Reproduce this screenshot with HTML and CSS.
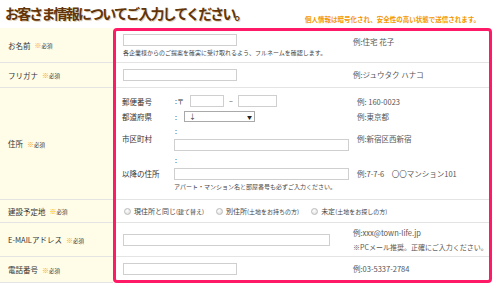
FILE: index.html
```html
<!DOCTYPE html>
<html lang="ja">
<head>
    <meta charset="UTF-8">
    <title>お客さま情報</title>
    <link rel="stylesheet" href="styles.css">
</head>
<body>
    <div class="page">
        <div class="head">
            <h1 class="title">お客さま情報についてご入力してください。</h1>
            <p class="secure">個人情報は暗号化され、安全性の高い状態で送信されます。</p>
        </div>

        <div class="form">
            <div class="labels">
                <div class="label h-name">お名前<span class="req"><b>※</b>必須</span></div>
                <div class="label h-kana">フリガナ<span class="req"><b>※</b>必須</span></div>
                <div class="label h-addr">住所<span class="req"><b>※</b>必須</span></div>
                <div class="label h-build">建設予定地<span class="req"><b>※</b>必須</span></div>
                <div class="label h-mail">E-MAILアドレス<span class="req"><b>※</b>必須</span></div>
                <div class="label h-tel">電話番号<span class="req"><b>※</b>必須</span></div>
            </div>

            <div class="panel">
                <div class="row r-name">
                    <div class="field top">
                        <input class="text" type="text">
                        <p class="note">各企業様からのご提案を確実に受け取れるよう、フルネームを確認します。</p>
                    </div>
                    <div class="ex ex-name">例:住宅 花子</div>
                </div>

                <div class="row r-kana">
                    <div class="field">
                        <input class="text" type="text">
                    </div>
                    <div class="ex">例:ジュウタク ハナコ</div>
                </div>

                <div class="row r-addr">
                    <div class="addr">
                        <div class="sub-label">郵便番号</div>
                        <div class="sub-field inline">
                            <span class="colon">:〒</span>
                            <input class="text zip1" type="text">
                            <span class="dash">−</span>
                            <input class="text zip2" type="text">
                        </div>
                        <div class="sub-ex">例: 160-0023</div>

                        <div class="sub-label">都道府県</div>
                        <div class="sub-field inline">
                            <span class="colon">:</span>
                            <div class="select"><span>↓</span><span class="arrow">▼</span></div>
                        </div>
                        <div class="sub-ex">例:東京都</div>

                        <div class="sub-label">市区町村</div>
                        <div class="sub-field">
                            <span class="colon-line">:</span>
                            <input class="text long" type="text">
                        </div>
                        <div class="sub-ex">例:新宿区西新宿</div>

                        <div class="sub-label">以降の住所</div>
                        <div class="sub-field">
                            <span class="colon-line">:</span>
                            <input class="text long" type="text">
                            <p class="note">アパート・マンション名と部屋番号も必ずご入力ください。</p>
                        </div>
                        <div class="sub-ex">例:7-7-6　〇〇マンション101</div>
                    </div>
                </div>

                <div class="row r-build">
                    <div class="radios">
                        <label class="radio"><input type="radio" name="site">現住所と同じ<small>(建て替え)</small></label>
                        <label class="radio"><input type="radio" name="site">別住所<small>(土地をお持ちの方)</small></label>
                        <label class="radio"><input type="radio" name="site">未定<small>(土地をお探しの方)</small></label>
                    </div>
                </div>

                <div class="row r-mail">
                    <div class="field">
                        <input class="text wide" type="text">
                    </div>
                    <div class="ex">
                        <span>例:xxx@town-life.jp</span>
                        <span class="ex-small">※PCメール推奨。正確にご入力ください。</span>
                    </div>
                </div>

                <div class="row r-tel">
                    <div class="field">
                        <input class="text" type="text">
                    </div>
                    <div class="ex">例:03-5337-2784</div>
                </div>
            </div>
        </div>
    </div>
</body>
</html>
```

FILE: styles.css
```css
* {
    box-sizing: border-box;
}
body {
    margin: 0;
    font-family: "Noto Sans CJK JP", "Noto Sans", sans-serif;
    color: #333;
    background: #fff;
}
.page {
    width: 500px;
}
.head {
    height: 28px;
    display: flex;
    justify-content: space-between;
    align-items: flex-start;
    padding: 0 20px 0 5px;
}
.title {
    margin: 0;
    font-size: 14px;
    line-height: 26px;
    font-weight: bold;
    color: #623408; /* brown heading */
    letter-spacing: -1.85px;
    white-space: nowrap;
    text-shadow: 1px 1px 0 #e2d3bb, -1px 0 0 #fff;
}
.secure {
    margin: 14px 0 0;
    font-size: 6.5px;
    line-height: 10px;
    font-weight: bold;
    color: #f39800;
    white-space: nowrap;
}

.form {
    display: flex;
    width: 492px;
}
.labels {
    width: 113px;
    display: flex;
    flex-direction: column;
}
.label {
    background: #fffde8;
    border-bottom: 1px solid #e4e4e4;
    display: flex;
    align-items: center;
    padding-left: 8px;
    font-size: 7.5px;
    white-space: nowrap;
}
.req {
    margin-left: 4px;
    font-size: 5.5px;
}
.req b {
    color: #f5a623;
    font-weight: normal;
    font-size: 7px;
}
.h-name { height: 35px; }
.h-kana { height: 25px; }
.h-addr { height: 112px; }
.h-build { height: 23px; }
.h-mail { height: 34px; }
.h-tel { height: 26px; }

.panel {
    flex: 1;
    border: 3px solid #ff1a68;
    border-radius: 4px;
}
.row {
    display: flex;
    border-bottom: 1px solid #e4e4e4;
}
.row:last-child {
    border-bottom: none;
}
.r-name { height: 32px; }
.r-kana { height: 25px; }
.r-addr { height: 112px; }
.r-build { height: 23px; }
.r-mail { height: 34px; }
.r-tel { height: 23px; }

.field {
    width: 234px;
    padding-left: 7px;
    display: flex;
    flex-direction: column;
    justify-content: center;
}
.field.top {
    justify-content: flex-start;
    padding-top: 3px;
}
.text {
    display: block;
    width: 114px;
    height: 12px;
    margin: 0;
    padding: 0;
    border: 1px solid #cfcfcf;
    background: #fff;
}
.wide {
    width: 207px;
}
.note {
    margin: 2px 0 0;
    font-size: 6px;
    line-height: 10px;
    color: #444;
    white-space: nowrap;
}
.ex {
    padding-left: 3px;
    display: flex;
    flex-direction: column;
    justify-content: center;
    font-size: 7.5px;
    line-height: 14px;
    color: #555;
    white-space: nowrap;
}
.ex-name {
    justify-content: flex-start;
    padding-top: 4px;
}
.ex-small {
    font-size: 7px;
}

/* address block */
.addr {
    width: 100%;
    display: grid;
    grid-template-columns: 50px 178px 1fr;
    row-gap: 4px;
    align-items: center;
    align-content: start;
    padding: 7px 0 0 6px;
}
.sub-label {
    font-size: 7.5px;
    white-space: nowrap;
}
.sub-field {
    padding-left: 2px;
    display: flex;
    flex-direction: column;
}
.sub-field.inline {
    flex-direction: row;
    align-items: center;
    font-size: 7px;
}
.colon {
    margin-left: 1px;
    width: 15px;
    flex: none;
}
.zip1 {
    width: 34px;
}
.dash {
    width: 14px;
    text-align: center;
    color: #555;
}
.zip2 {
    width: 39px;
}
.select {
    width: 71px;
    height: 11px;
    margin-left: -6px;
    border: 1px solid #a9a9a9;
    background: #fff;
    display: flex;
    justify-content: space-between;
    align-items: center;
    padding: 0 2px 0 4px;
    font-size: 7px;
    line-height: 9px;
}
.arrow {
    font-size: 5px;
    color: #222;
}
.colon-line {
    margin-left: 1px;
    font-size: 7px;
    line-height: 10px;
    height: 10px;
    margin-bottom: 3px;
}
.long {
    width: 175px;
}
.sub-ex {
    padding-left: 7px;
    font-size: 7.5px;
    color: #555;
    white-space: nowrap;
}

/* radios */
.radios {
    display: flex;
    align-items: center;
    padding-left: 8px;
    font-size: 7px;
    white-space: nowrap;
}
.radio {
    display: flex;
    align-items: center;
    margin-right: 12px;
    color: #444;
}
.radio input {
    appearance: none;
    width: 7px;
    height: 7px;
    margin: 0 3px 0 0;
    border: 1px solid #bbb;
    border-radius: 50%;
    background: radial-gradient(circle at 40% 35%, #fff, #d8d8d8);
}
.radio small {
    font-size: 6px;
}
```
